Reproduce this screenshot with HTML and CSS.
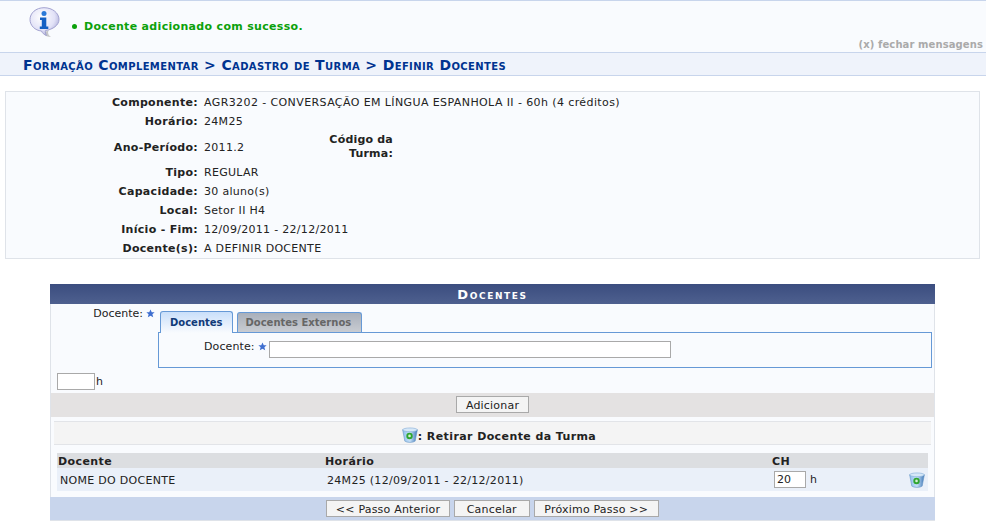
FILE: index.html
```html
<!DOCTYPE html>
<html lang="pt">
<head>
<meta charset="utf-8">
<title>Definir Docentes</title>
<link rel="stylesheet" href="styles.css">
</head>
<body>
<div class="messages">
  <svg class="info-icon" width="32" height="31" viewBox="0 0 32 31">
    <defs>
      <radialGradient id="bub" cx="0.4" cy="0.35" r="0.75">
        <stop offset="0" stop-color="#ffffff"/>
        <stop offset="0.6" stop-color="#e2e2f7"/>
        <stop offset="1" stop-color="#9f9fd0"/>
      </radialGradient>
    </defs>
    <path d="M19 25c0 2 1 4 3 5-3 0-6-1-8-4l6-3z" fill="#9a9a9a" opacity=".55"/>
    <path d="M15 .7C7 .7 1 6 1 12.500c0 6 5 11 11.500 11.500.7 2 2.500 3.500 5 4.500-1-1.700-1.300-3.300-1-5C24 22.500 30 18 30 12.500 30 6 23.500.7 15 .7z" fill="url(#bub)" stroke="#a2a2d0"/>
    <circle cx="15" cy="6.500" r="2.500" fill="#2a78d8"/>
    <path d="M11 10.500h6.300v9h2v2.500h-8.500v-2.500h2v-6.500h-1.800z" fill="#1560c4"/>
  </svg>
  <ul class="msg-list"><li>Docente adicionado com sucesso.</li></ul>
  <a class="close-msg">(x) fechar mensagens</a>
</div>
<h2 class="crumb">Formação Complementar &gt; Cadastro de Turma &gt; Definir Docentes</h2>

<div class="info">
  <table class="info-table">
    <tr><th>Componente:</th><td colspan="3" class="long">AGR3202 - CONVERSAÇÃO EM LÍNGUA ESPANHOLA II - 60h (4 créditos)</td></tr>
    <tr><th>Horário:</th><td colspan="3">24M25</td></tr>
    <tr class="tall"><th>Ano-Período:</th><td class="v-year">2011.2</td><th class="code">Código da Turma:</th><td></td></tr>
    <tr><th>Tipo:</th><td colspan="3">REGULAR</td></tr>
    <tr><th>Capacidade:</th><td colspan="3">30 aluno(s)</td></tr>
    <tr><th>Local:</th><td colspan="3">Setor II H4</td></tr>
    <tr><th>Início - Fim:</th><td colspan="3">12/09/2011 - 22/12/2011</td></tr>
    <tr><th>Docente(s):</th><td colspan="3">A DEFINIR DOCENTE</td></tr>
  </table>
</div>

<div class="panel">
  <div class="caption">Docentes</div>
  <div class="panel-body">
    <div class="tab-row">
      <div class="tab-label"><span>Docente:</span>
        <svg class="star" width="9" height="9" viewBox="0 0 10 10"><path d="M5 .5l1.400 3h3.200l-2.500 2.200.9 3.500L5 7.400 2 9.200l.9-3.500L.4 3.500h3.200z" fill="#3f6fd0"/></svg>
      </div>
      <div class="tabs">
        <div class="tab-strip">
          <div class="tab active">Docentes</div>
          <div class="tab">Docentes Externos</div>
        </div>
        <div class="tab-pane">
          <span class="pane-label">Docente:</span>
          <svg class="star" width="9" height="9" viewBox="0 0 10 10"><path d="M5 .5l1.400 3h3.200l-2.500 2.200.9 3.500L5 7.400 2 9.200l.9-3.500L.4 3.500h3.200z" fill="#3f6fd0"/></svg>
          <input class="field wide" type="text">
        </div>
      </div>
    </div>
    <div class="hours-row"><input class="field hours" type="text"><span>h</span></div>
    <div class="add-row"><button class="btn" type="button">Adicionar</button></div>
    <div class="legend">
      <svg class="trash" width="16" height="16" viewBox="0 0 17 17"><use href="#trash-shape"/></svg>
      <b>: Retirar Docente da Turma</b>
    </div>
    <table class="list">
      <thead><tr><th class="c1">Docente</th><th class="c2">Horário</th><th class="c3">CH</th><th class="c4"></th></tr></thead>
      <tbody><tr>
        <td class="c1">NOME DO DOCENTE</td>
        <td class="c2">24M25 (12/09/2011 - 22/12/2011)</td>
        <td class="c3"><input class="field ch" type="text" value="20"><span class="ch-unit">h</span></td>
        <td class="c4"><svg class="trash" width="16" height="16" viewBox="0 0 17 17">
          <defs>
            <linearGradient id="tr" x1="0" x2="1" y1="0" y2="0"><stop offset="0" stop-color="#8fc0ee"/><stop offset=".5" stop-color="#c6e0f7"/><stop offset="1" stop-color="#3f78b8"/></linearGradient>
          </defs>
          <g id="trash-shape">
            <path d="M.7 3l2.300 12c2 1.800 9 1.800 11 0l2.300-12z" fill="url(#tr)" stroke="#5f8fc0" stroke-width=".6"/>
            <ellipse cx="8.500" cy="3" rx="7.800" ry="2" fill="#d6e8f8" stroke="#7aa6d4" stroke-width=".6"/>
            <circle cx="8" cy="9.500" r="3.400" fill="#2fa52f"/>
            <circle cx="8" cy="9.500" r="1.400" fill="#d8f0d8"/>
          </g>
        </svg></td>
      </tr></tbody>
    </table>
  </div>
  <div class="footer">
    <button class="btn prev-pad" type="button">&lt;&lt; Passo Anterior</button>
    <button class="btn mid-pad" type="button">Cancelar</button>
    <button class="btn next-pad" type="button">Próximo Passo &gt;&gt;</button>
  </div>
</div>
</body>
</html>
```
FILE: styles.css
```css
* { box-sizing: border-box; }
html, body { margin: 0; padding: 0; background: #fff; }
body { font: 11px "DejaVu Sans", Verdana, sans-serif; color: #222; width: 986px; height: 522px; overflow: hidden; }

.messages {
  height: 53px;
  background: #f9fbfe;
  border-top: 1px solid #c8d5ec;
  border-bottom: 1px solid #c8d5ec;
  display: flex;
  position: relative;
}
.info-icon { margin: 6px 0 0 29px; flex: none; }
.msg-list { margin: 18px 0 0; padding: 0 0 0 11px; list-style: none; color: #0ba10b; font-weight: bold; letter-spacing: .32px; }
.msg-list li { display: flex; align-items: center; gap: 7px; height: 14px; }
.msg-list li::before { content: ""; width: 5px; height: 5px; border-radius: 50%; background: #0ba10b; flex: none; }
.close-msg { position: absolute; right: 3px; bottom: 2px; color: #aaa; font-size: 10px; font-weight: bold; letter-spacing: .1px; }

.crumb {
  margin: 0;
  height: 23px;
  padding: 4px 0 0 23px;
  background: #eff3fb;
  border-bottom: 1px solid #c8d5ec;
  color: #003390;
  font-size: 14px;
  font-weight: bold;
  font-variant: small-caps;
  line-height: 16px;
  letter-spacing: .38px;
  white-space: nowrap;
}

.info {
  margin: 15px 6px 0 5px;
  height: 168px;
  background: #f9fbfe;
  border: 1px solid #dfe3e9;
  padding-top: 1px;
}
.info-table { border-collapse: collapse; letter-spacing: .3px; }
.info-table tr { height: 19px; }
.info-table tr.tall { height: 32px; }
.info-table th { width: 197px; padding: 0 5px 0 0; text-align: right; font-weight: bold; color: #222; }
.info-table td { padding: 0 0 0 1px; white-space: nowrap; }
.info-table td.long { letter-spacing: .4px; }
.info-table .v-year { width: 101px; }
.info-table th.code { width: 89px; line-height: 14px; padding: 0; letter-spacing: .2px; }

.panel { margin: 25px 51px 0 50px; }
.caption {
  height: 20px;
  background: linear-gradient(#3b4d7f, #4e608f);
  color: #fff;
  text-align: center;
  font-weight: bold;
  font-variant: small-caps;
  font-size: 13px;
  line-height: 21px;
  letter-spacing: 1.6px;
}
.panel-body {
  background: #f9fbfe;
  border-left: 1px solid #dfe3e9;
  border-right: 1px solid #dfe3e9;
  height: 193px;
}
.tab-row { display: flex; height: 63px; }
.tab-label { width: 107px; flex: none; display: flex; justify-content: flex-end; align-items: flex-start; gap: 3px; padding-top: 3px; }
.tab-label .star { margin-top: 2px; margin-right: 3px; flex: none; }
.tabs { margin-top: 7px; width: 774px; }
.tab-strip { display: flex; gap: 4px; height: 21px; padding-left: 2px; position: relative; z-index: 1; }
.tab {
  height: 20px;
  margin-top: 1px;
  padding: 4px 10px 0 8px;
  background: linear-gradient(#a9b0bb, #c9ccd2);
  border: 1px solid #6699d6;
  border-bottom: 0;
  border-radius: 3px 3px 0 0;
  color: #666;
  font-size: 10px;
  font-weight: bold;
}
.tab.active {
  margin-top: 0;
  height: 22px;
  padding: 5px 9px 0 9px;
  background: linear-gradient(#c9dffa, #f9fbfe);
  color: #103a78;
}
.tab-pane {
  height: 36px;
  border: 1px solid #6699d6;
  background: #f9fbfe;
  display: flex;
  align-items: flex-start;
  padding: 8px 0 0 45px;
}
.pane-label { margin-top: -1px; letter-spacing: .1px; }
.tab-pane .star { margin: 1px 0 0 3px; flex: none; }
.field { border: 1px solid #a9a9a9; background: #fff; font: 11px "DejaVu Sans", sans-serif; padding: 0 2px; margin: 0; color: #222; }
.wide { width: 402px; height: 17px; margin-left: 2px; }
.hours-row { height: 26px; padding: 6px 0 0 6px; display: flex; align-items: flex-start; }
.hours-row span { margin: 2px 0 0 1px; }
.hours { width: 38px; height: 17px; }
.add-row { height: 24px; background: #e4e2e2; display: flex; justify-content: center; padding-top: 3px; }
.btn {
  height: 17px;
  border: 1px solid #a9a9a9;
  background: #f4f4f4;
  font: 11px "DejaVu Sans", sans-serif;
  color: #222;
  padding: 2px 9px 0;
  margin: 0;
  letter-spacing: .2px;
}
.btn.prev-pad { padding: 2px 8.5px 0; }
.btn.next-pad { padding: 2px 9.5px 0; }
.btn.mid-pad { padding: 2px 12px 0; }
.legend {
  margin: 4px 3px 0;
  height: 24px;
  background: #f4f4f4;
  border-top: 1px solid #e2e4e8;
  border-bottom: 1px solid #e2e4e8;
  display: flex;
  justify-content: center;
  align-items: center;
  padding: 6px 0 0 13px;
  letter-spacing: .4px;
}
.legend .trash { margin-top: -2px; }
.list { margin: 8px 0 0 6px; width: 871px; border-collapse: collapse; table-layout: fixed; letter-spacing: .3px; }
.list th { background: #dcdee1; height: 15px; text-align: left; padding: 1px 0 0 1px; font-weight: bold; letter-spacing: .4px; }
.list td { background: #eaf0f9; height: 23px; padding: 1px 0 0 3px; }
.list .c1 { width: 267px; }
.list .c2 { width: 447px; }
.list .c3 { width: 130px; }
.list td.c3 { padding: 0 0 0 3px; }
.ch { width: 32px; height: 17px; vertical-align: middle; }
.ch-unit { margin-left: 4px; }
.list td.c4 { padding: 0 0 0 8px; vertical-align: middle; }
.list td.c4 .trash { display: block; }
.footer { height: 24px; background: #c8d5ec; border-bottom: 1px solid #dfe3e9; display: flex; justify-content: center; gap: 4px; padding-top: 3px; }
```
